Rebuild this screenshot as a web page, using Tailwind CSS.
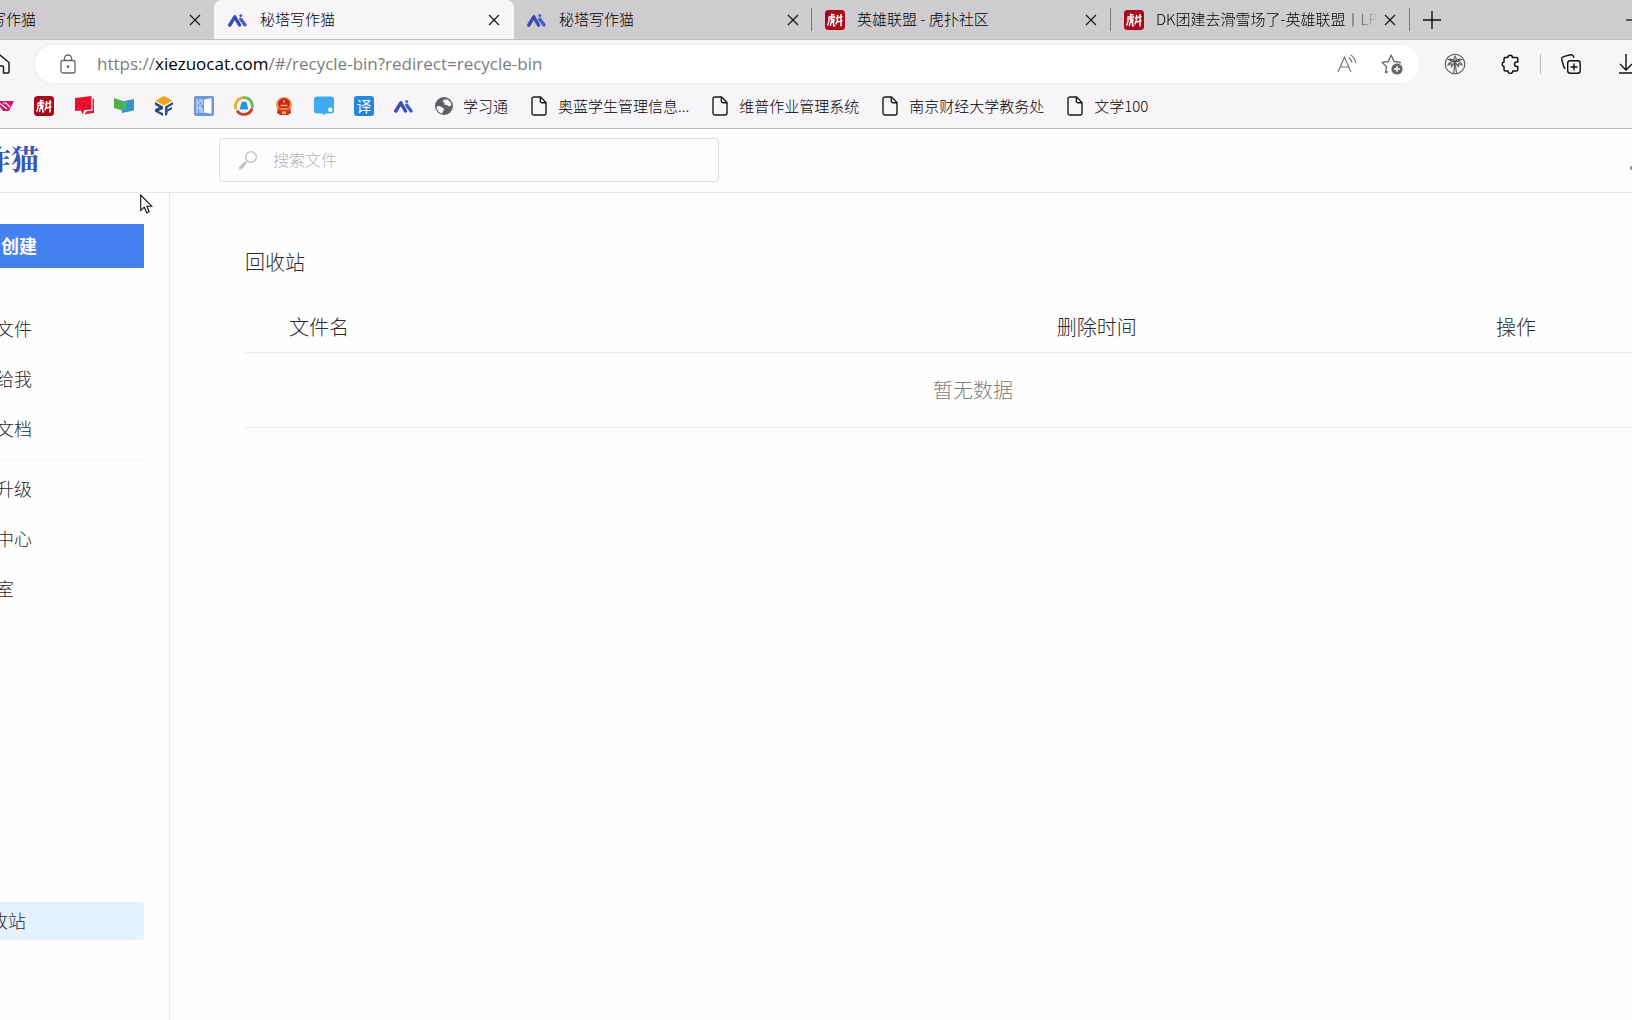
<!DOCTYPE html>
<html lang="zh-CN">
<head>
<meta charset="utf-8">
<title>秘塔写作猫</title>
<script src="https://cdn.jsdelivr.net/npm/@tailwindcss/browser@4"></script>
</head>
<body class="flex min-h-screen flex-col overflow-x-hidden bg-[#fefefe] font-['Noto_Sans_CJK_SC',sans-serif] font-light text-[#2a2a2a]">
<svg class="hidden">
  <symbol id="ai" viewBox="0 0 20 20"><g fill="none" stroke-width="3.400" stroke-linecap="round" stroke-linejoin="round"><path stroke="#3a4db0" d="M1.800 15 6.800 6.800l4.700 8.200"/><path stroke="#4560c4" d="m12.800 9.200 4.300 5.800"/></g><circle cx="12.800" cy="5.400" r="1.500" fill="#4560c4"/></symbol>
  <symbol id="hupu" viewBox="0 0 20 20"><rect width="20" height="20" rx="3.500" fill="#a80a1c"/><g fill="none" stroke="#fff" stroke-width="1.400"><path d="M6.500 3.600v3M6.500 4.800h3M3.500 7h6.800M4 7v4.500L2.600 15.500M5 9.300h4.600M6.800 7.400v3.400h2.800M5.600 12.300h3.600M6.200 12.300 5.300 16M8.600 12.300v3.400h1.600M12.500 5v4.500l-1.500 5M10.800 8.500l3-1M10.800 12.500l6.800-2M16 4v12.500M14 7.500l3.500-1"/></g></symbol>
  <symbol id="close" viewBox="0 0 12 12"><path d="m1 1 10 10M11 1 1 11" stroke="#1a1a1a" stroke-width="1.300" fill="none"/></symbol>
  <symbol id="doc" viewBox="0 0 16 20"><path d="M3 1h6.500L15 6.500V17a2 2 0 0 1-2 2H3a2 2 0 0 1-2-2V3a2 2 0 0 1 2-2ZM9.300 1v4a1.800 1.800 0 0 0 1.800 1.800H15" fill="none" stroke="#1c1c1c" stroke-width="1.400"/></symbol>
</svg>

<div class="bg-[#f7f5f8] text-[15px] text-black">
  <div role="tablist" class="flex h-10 overflow-hidden border-b border-[#bfbcbf] bg-[#cfccd0]">
    <div role="tab" class="-ml-[85px] flex w-[299px] shrink-0 items-center gap-3 pr-2 pl-3.5">
      <svg class="size-5 shrink-0"><use href="#ai"/></svg><span class="flex-1 whitespace-nowrap">秘塔写作猫</span>
      <button aria-label="关闭" class="flex w-[22px] justify-center"><svg class="size-3"><use href="#close"/></svg></button>
    </div>
    <div role="tab" aria-selected="true" class="-mb-px flex w-[300px] shrink-0 items-center gap-3 rounded-t-lg bg-[#f7f5f8] pr-[9px] pb-px pl-3.5">
      <svg class="size-5 shrink-0"><use href="#ai"/></svg><span class="flex-1 whitespace-nowrap">秘塔写作猫</span>
      <button aria-label="关闭" class="flex w-[22px] justify-center"><svg class="size-3"><use href="#close"/></svg></button>
    </div>
    <div role="tab" class="flex w-[298px] shrink-0 items-center gap-3 pr-2 pl-[13px]">
      <svg class="size-5 shrink-0"><use href="#ai"/></svg><span class="flex-1 whitespace-nowrap">秘塔写作猫</span>
      <button aria-label="关闭" class="flex w-[22px] justify-center"><svg class="size-3"><use href="#close"/></svg></button>
    </div>
    <div class="-ml-px my-2 w-px bg-[#777]"></div>
    <div role="tab" class="flex w-[298px] shrink-0 items-center gap-3 pr-2 pl-[13px]">
      <svg class="size-5 shrink-0"><use href="#hupu"/></svg><span class="flex-1 whitespace-nowrap">英雄联盟 - 虎扑社区</span>
      <button aria-label="关闭" class="flex w-[22px] justify-center"><svg class="size-3"><use href="#close"/></svg></button>
    </div>
    <div class="my-2 w-px bg-[#777]"></div>
    <div role="tab" class="flex w-[298px] shrink-0 items-center gap-3 pr-2 pl-[13px]">
      <svg class="size-5 shrink-0"><use href="#hupu"/></svg><span class="min-w-0 flex-1 overflow-hidden whitespace-nowrap [mask-image:linear-gradient(to_right,black_85%,transparent)]">DK团建去滑雪场了-英雄联盟丨LPL</span>
      <button aria-label="关闭" class="-ml-3 flex w-[22px] shrink-0 justify-center"><svg class="size-3"><use href="#close"/></svg></button>
    </div>
    <div class="my-2 w-px bg-[#777]"></div>
    <button aria-label="新建标签页" class="ml-[13px] shrink-0"><svg class="size-[18px]" viewBox="0 0 18 18"><path d="M9 0v18M0 9h18" stroke="#111" stroke-width="1.400"/></svg></button>
    <button aria-label="最小化" class="-mr-2 ml-auto shrink-0"><svg class="h-3 w-3.5" viewBox="0 0 14 12"><path d="M0 6h14" stroke="#111" stroke-width="1.300"/></svg></button>
  </div>

  <div class="flex h-12 items-center overflow-hidden">
    <button aria-label="主页" class="-ml-2.5 shrink-0"><svg class="size-5" viewBox="0 0 20 20" fill="none" stroke="#1c1c1c" stroke-width="1.500" stroke-linejoin="round"><path d="M1 8.500 10 1l9 7.500V18a1 1 0 0 1-1 1h-4.500v-6a1 1 0 0 0-1-1h-5a1 1 0 0 0-1 1v6H2a1 1 0 0 1-1-1Z"/></svg></button>
    <div class="ml-[25px] flex h-[38px] min-w-0 flex-1 items-center rounded-full bg-white pr-[17px] pl-[25px] shadow-[0_0_3px_#e4e2e6]">
      <svg class="h-5 w-4 shrink-0" viewBox="0 0 16 20" fill="none" stroke="#666" stroke-width="1.300"><rect x="1" y="6.500" width="14" height="12.500" rx="2"/><path d="M4.500 6.500V4.500a3.500 3.500 0 0 1 7 0v2"/><circle cx="8" cy="12.700" r=".7" fill="#666"/></svg>
      <div role="textbox" aria-label="地址" class="ml-[21px] flex-1 font-['Open_Sans',sans-serif] text-[17px] font-normal whitespace-nowrap text-[#7c7c7c]">https://<span class="text-black">xiezuocat.com</span>/#/recycle-bin?redirect=recycle-bin</div>
      <button aria-label="朗读"><svg class="size-5" viewBox="0 0 20 20" fill="none" stroke="#777" stroke-width="1.200"><path d="M1 18 7.500 3 14 18M3.300 13h8.400M11.500 3.500c2 1 3 2.700 3.300 5M13.500 1c3 1.500 4.800 4.300 5 8"/></svg></button>
      <button aria-label="收藏" class="ml-6"><svg class="size-[22px]" viewBox="0 0 22 22" fill="none"><path d="m7 18.500-2.500 1.300 1.100-6.100L1 9.400l6.400-.9L10.200 2 13 8.500l6.500.9-1 1" stroke="#666" stroke-width="1.300" stroke-linejoin="round"/><circle cx="16" cy="16" r="5.600" fill="#666"/><path d="M16 13v6M13 16h6" stroke="#fff" stroke-width="1.300"/></svg></button>
    </div>
    <button aria-label="棕榈树" class="ml-6"><svg class="size-[22px]" viewBox="0 0 22 22" fill="none" stroke="#555" stroke-width="1.100"><circle cx="11" cy="11" r="9.800"/><path d="M9.500 20.500c1-4 1.200-7 1-11.500M12.500 20.500c-.7-4-.9-7-.9-11.500M11 9C8 8 5 9 4 12l3.200-1.500.3 3L11 9Zm0 0c3-1 6 0 7 3l-3.200-1.500-.3 3L11 9Zm0 0C9 6.500 7 5.500 4.500 6.500L8 8m3 1c2-2.500 4-3.500 6.500-2.500L14 8m-3 1C9.500 7 9.500 5 11 3c1.500 2 1.500 4 0 6"/></svg></button>
    <button aria-label="扩展" class="ml-[34px]"><svg class="size-5" viewBox="0 0 20 20"><path d="M4.500 3.500h3.300a2.300 2.300 0 0 1 4.600 0H16A1.500 1.500 0 0 1 17.800 5v3h-1.100a2.200 2.200 0 0 0 0 4.400h1.100V15.500A1.500 1.500 0 0 1 16.300 17h-3.500a2.400 2.400 0 0 1-4.800 0H5.500A1.500 1.500 0 0 1 4 15.500v-3.100a2.300 2.300 0 0 1 0-4.500V5a1.500 1.500 0 0 1 1.500-1.500Z" fill="none" stroke="#111" stroke-width="1.500" stroke-linejoin="round"/></svg></button>
    <div class="ml-5 h-5 w-px bg-[#bbb]"></div>
    <button aria-label="集锦" class="ml-5"><svg class="size-5" viewBox="0 0 20 20" fill="none" stroke="#111" stroke-width="1.400"><rect x="6.700" y="6.700" width="12.500" height="12.500" rx="2.500"/><path d="M13 9.500v7M9.500 13h7M4.500 14.500c-1-.3-1.600-1-1.800-2L.8 5.500C.5 4 1.200 3 2.500 2.600L9.500.8c1.400-.3 2.500.3 3 1.600l.4 1.400"/></svg></button>
    <button aria-label="下载" class="-mr-1.5 ml-[37px]"><svg class="size-5" viewBox="0 0 20 20" fill="none" stroke="#111" stroke-width="1.400"><path d="M8 0v16M2 10l6 6 6-6M1 19h15"/></svg></button>
  </div>

  <nav aria-label="书签" class="flex h-[41px] items-center overflow-hidden border-b border-[#b9b9b9] pb-1 whitespace-nowrap">
    <div class="-ml-1.5 flex shrink-0 gap-5">
      <a href="#" aria-label="书签"><svg class="size-5" viewBox="0 0 20 20"><path d="M0 5h20l-5 10H9L4 8Z" fill="#d41568"/><path d="m6 7.500 7 5.500M9 7h3l4 4" stroke="#fff" stroke-width="1.200" fill="none"/></svg></a>
      <a href="#" aria-label="虎扑"><svg class="size-5"><use href="#hupu"/></svg></a>
      <a href="#" aria-label="书签"><svg class="size-5" viewBox="0 0 20 20"><path d="M1 2 17.500 0v13.500l-7 .6-2 4.400-1.500-4L1 15Z" fill="#e8102e"/><path d="M18.500 2.500H20V17l-9.500 1.500 2-3.300 6-.7Z" fill="#cf2741"/></svg></a>
      <a href="#" aria-label="书签"><svg class="size-5" viewBox="0 0 20 20"><path d="m0 2 9 3v9.500L0 12Z" fill="#52ae46"/><path d="M8 5.500 20 3v11.500L8 17Z" fill="#3b93bd"/><path d="M8 5.500 13 4.500v8.500l-5 1Z" fill="#3ab67e"/></svg></a>
      <a href="#" aria-label="书签"><svg class="size-5" viewBox="0 0 20 20"><path d="M1.500 4.800 10 0l8.500 4.800L10 9.500Z" fill="#f2a51c"/><path d="m1 6 8 4.500v2.500l-4.500 2 4.500 2.300V20l-8-4.500v-2.200l4-2.100L1 8.800Z" fill="#244a80"/><path d="m11 10.500 8-4.500v2.500l-5.500 3.200v1.500l4.500-2.300v2.300L13.500 15.700v2.800L11 20Z" fill="#27568f"/></svg></a>
      <a href="#" aria-label="书签"><svg class="size-5" viewBox="0 0 20 20"><rect width="20" height="20" rx="2" fill="#6e96df"/><path d="m10 3.500 7.500-1.300v15.600L10 16.500Z" fill="#fff"/><path d="M3 3v14M6 3v3m0 2v9M8 3v6m0 3v5M3 7h3m-3 5h5" stroke="#dfe9fb" stroke-width="1.100"/></svg></a>
      <a href="#" aria-label="书签"><svg class="size-5" viewBox="0 0 20 20" fill="none" stroke-width="2.800"><path d="M2.200 13.500A8.400 8.400 0 0 1 9 1.700" stroke="#f0a72d"/><path d="M9 1.700A8.400 8.400 0 0 1 18.200 12" stroke="#65b854"/><path d="M18 12.500A8.400 8.400 0 0 1 3 14.700" stroke="#cf392e"/><path d="M10 5.500c-2.600 0-3.300 2-3.300 4L5.500 13.500h9l-1.200-4c0-2-.7-4-3.300-4Z" fill="#2697dc"/></svg></a>
      <a href="#" aria-label="书签"><svg class="size-5" viewBox="0 0 20 20"><circle cx="10" cy="9" r="8" fill="#f0a13a"/><circle cx="10" cy="8" r="6" fill="#c9202a"/><path d="M4 12h12l1 5-3 2H6l-3-2Z" fill="#cf2d27"/><path d="M6.500 9.500h7M10 4v3M5 12.800h10" stroke="#f6bd4e" stroke-width="1.300"/><path d="M8 15.500h4v2.500H8Z" fill="#f6bd4e"/></svg></a>
      <a href="#" aria-label="书签"><svg class="size-5" viewBox="0 0 20 20"><path d="M3 .5h14a3 3 0 0 1 3 3v11a3 3 0 0 1-3 3h-5L10 19l-2-1.500H3a3 3 0 0 1-3-3v-11a3 3 0 0 1 3-3Z" fill="#3fa9f3"/><circle cx="16.300" cy="13.800" r="2.200" fill="#fff"/></svg></a>
      <a href="#" aria-label="翻译" class="flex size-5 items-center justify-center rounded-[3px] bg-[#2486dc] text-[15px] leading-5 font-normal text-white">译</a>
      <a href="#" aria-label="写作猫"><svg class="size-5"><use href="#ai"/></svg></a>
    </div>
    <a href="#" class="ml-5 flex items-center gap-[9px]"><svg class="size-5" viewBox="0 0 20 20"><circle cx="10" cy="10" r="9" fill="#5f6063"/><path d="M2.500 10.500c2-1 4-.8 5.500 1 2 .3 2.500 1.500 1.500 3L8 17.500c-3-.7-5.500-3.500-5.500-7ZM10 3.500h3.500c2.500 1.500 3.500 3 4 5.500l-2 1.500-3-1.500-2.500-.5.500-2-2-.5Z" fill="#f7f5f8"/></svg>学习通</a>
    <a href="#" class="ml-[23px] flex items-center gap-[11px]"><svg class="h-5 w-4"><use href="#doc"/></svg>奥蓝学生管理信息...</a>
    <a href="#" class="ml-[23px] flex items-center gap-[11px]"><svg class="h-5 w-4"><use href="#doc"/></svg>维普作业管理系统</a>
    <a href="#" class="ml-[23px] flex items-center gap-[11px]"><svg class="h-5 w-4"><use href="#doc"/></svg>南京财经大学教务处</a>
    <a href="#" class="ml-[23px] flex items-center gap-[11px]"><svg class="h-5 w-4"><use href="#doc"/></svg>文学100</a>
  </nav>
</div>

<header class="flex h-16 items-center overflow-hidden border-b border-[#e8e8e8] pb-0.5">
  <div class="w-[219px] shrink-0"><div class="-mt-1 -ml-[17px] font-['Noto_Serif_CJK_SC','Noto_Sans_CJK_SC',serif] text-[28px] leading-10 font-bold text-[#3556b8]">作猫</div></div>
  <label class="flex h-11 w-[500px] items-center gap-[15px] rounded border border-[#dcdcdc] pl-[18px]">
    <svg class="size-5" viewBox="0 0 20 20" fill="none" stroke="#c4c4c4"><circle cx="13" cy="7" r="5.300" stroke-width="1.500"/><path d="m9.500 11-2.500 2.500" stroke-width="1.500"/><path d="M6.800 13.500 2.500 17.800" stroke-width="3.200" stroke-linecap="round"/></svg>
    <input type="text" aria-label="搜索文件" placeholder="搜索文件" class="min-w-0 flex-1 pb-0.5 text-base outline-none placeholder:text-[#b0b4ba]">
  </label>
  <div class="-mr-0.5 mt-4 ml-auto size-1 rounded-full bg-[#888]"></div>
</header>

<div class="flex flex-1 overflow-hidden">
  <aside class="flex w-[170px] shrink-0 flex-col overflow-hidden border-r border-[#e8e8ea] pt-[31px] pr-[25px] text-lg">
    <button class="h-11 bg-[#4480ee] pb-0.5 pl-px text-left font-bold text-white">创建</button>
    <nav class="mt-[35px] flex flex-col">
      <a href="#" class="-ml-1 flex h-[50px] items-center">文件</a>
      <a href="#" class="-ml-1 flex h-[50px] items-center">给我</a>
      <a href="#" class="-ml-1 flex h-[50px] items-center">文档</a>
      <hr class="mt-1.5 mb-[3px] border-[#f5f5f5]">
      <a href="#" class="-ml-1 flex h-[50px] items-center">升级</a>
      <a href="#" class="-ml-1 flex h-[50px] items-center">中心</a>
      <a href="#" class="-ml-1 flex h-[50px] items-center">室</a>
    </nav>
    <a href="#" class="mt-auto mb-20 flex h-[38px] shrink-0 items-center rounded-r bg-[#e5f1fd] pb-0.5"><span class="-ml-2.5">收站</span></a>
  </aside>
  <main class="min-w-0 flex-1 overflow-hidden pt-[54px] pl-[75px] text-xl">
    <h1 class="h-[30px] leading-[30px]">回收站</h1>
    <table class="mt-[25px] -mr-[69px] w-[calc(100%+69px)] table-fixed border-collapse">
      <thead>
        <tr class="h-[50px] border-b border-[#ebebeb]">
          <th scope="col" class="w-[42%] pl-11 text-left font-light">文件名</th>
          <th scope="col" class="w-[33%] font-light">删除时间</th>
          <th scope="col" class="pr-1.5 font-light">操作</th>
        </tr>
      </thead>
      <tbody><tr class="h-[75px] border-b border-[#ebebeb]"><td colspan="3" class="text-center text-[#808080]">暂无数据</td></tr></tbody>
    </table>
  </main>
</div>

<svg class="pointer-events-none absolute top-[194px] left-[140px] h-5 w-[13px]" viewBox="0 0 13 20"><path d="M.7 1v15.500l3.600-3.300 2.400 5.600 2.500-1-2.300-5.500h5Z" fill="#fff" stroke="#111" stroke-width="1.100"/></svg>
</body>
</html>
